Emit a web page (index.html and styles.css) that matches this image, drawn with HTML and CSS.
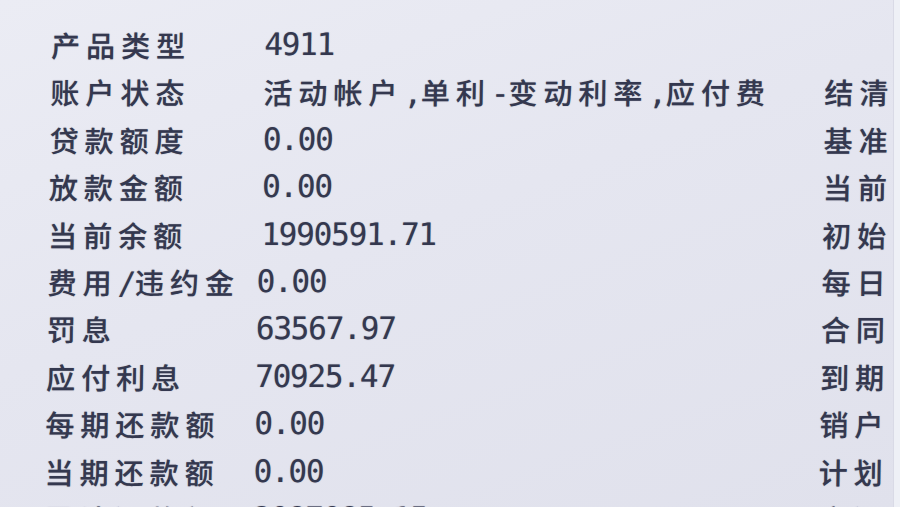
FILE: index.html
```html
<!DOCTYPE html>
<html lang="zh-CN">
<head>
<meta charset="utf-8">
<title>账户信息</title>
<link rel="stylesheet" href="styles.css">
</head>
<body>
<div class="sheet">
  <div class="grid">
    <div class="lab"><span class="cn">产品类型</span></div>
    <div class="val"><span class="num">4911</span></div>
    <div class="side"></div>

    <div class="lab"><span class="cn">账户状态</span></div>
    <div class="val"><span class="cn">活动帐户</span><span class="hw">,</span><span class="cn">单利</span><span class="hw">-</span><span class="cn">变动利率</span><span class="hw">,</span><span class="cn">应付费</span></div>
    <div class="side"><span class="cn">结清</span></div>

    <div class="lab"><span class="cn">贷款额度</span></div>
    <div class="val"><span class="num">0.00</span></div>
    <div class="side"><span class="cn">基准</span></div>

    <div class="lab"><span class="cn">放款金额</span></div>
    <div class="val"><span class="num">0.00</span></div>
    <div class="side"><span class="cn">当前</span></div>

    <div class="lab"><span class="cn">当前余额</span></div>
    <div class="val"><span class="num">1990591.71</span></div>
    <div class="side"><span class="cn">初始</span></div>

    <div class="lab"><span class="cn">费用</span><span class="hw">/</span><span class="cn">违约金</span></div>
    <div class="val val-near"><span class="num">0.00</span></div>
    <div class="side"><span class="cn">每日</span></div>

    <div class="lab"><span class="cn">罚息</span></div>
    <div class="val val-near"><span class="num">63567.97</span></div>
    <div class="side"><span class="cn">合同</span></div>

    <div class="lab"><span class="cn">应付利息</span></div>
    <div class="val val-near"><span class="num">70925.47</span></div>
    <div class="side"><span class="cn">到期</span></div>

    <div class="lab"><span class="cn">每期还款额</span></div>
    <div class="val val-near"><span class="num">0.00</span></div>
    <div class="side"><span class="cn">销户</span></div>

    <div class="lab"><span class="cn">当期还款额</span></div>
    <div class="val val-near"><span class="num">0.00</span></div>
    <div class="side"><span class="cn">计划</span></div>

    <div class="lab"><span class="cn">累计还款额</span></div>
    <div class="val val-near"><span class="num">2087085.15</span></div>
    <div class="side"><span class="cn">应还</span></div>
  </div>
  <div class="edge"></div>
</div>
</body>
</html>
```
FILE: styles.css
```css
html, body {
  margin: 0;
  padding: 0;
  width: 900px;
  height: 507px;
  overflow: hidden;
}

body {
  background: linear-gradient(160deg, #ebecf4 0%, #e5e6f0 45%, #e0e1ec 100%);
  color: #34384f;
  font-family: "Noto Sans CJK SC", "DejaVu Sans", sans-serif;
}

.sheet {
  position: relative;
  width: 900px;
  height: 507px;
  overflow: hidden;
}

.grid {
  display: grid;
  grid-template-columns: 213px 561px 66px;
  grid-auto-rows: 47.4px;
  align-items: center;
  padding: 21px 0 0 52px;
  transform: skewX(-0.9deg);
  transform-origin: 0 0;
  text-shadow: 0 0 1px rgba(52, 56, 79, 0.5);
}

.lab, .val, .side {
  white-space: nowrap;
  line-height: 47.4px;
  height: 47.4px;
}

.val-near {
  margin-left: -4px;
}

.cn {
  font-family: "Noto Sans CJK SC", sans-serif;
  font-size: 29px;
  font-weight: 500;
  letter-spacing: 6px;
}

.hw, .num {
  font-family: "DejaVu Sans Mono", monospace;
  font-size: 31px;
  letter-spacing: -1.2px;
}

.edge {
  position: absolute;
  top: 0;
  right: 0;
  width: 6px;
  height: 100%;
  background: #eef0f6;
  border-left: 1px solid #d9dae6;
}
```
